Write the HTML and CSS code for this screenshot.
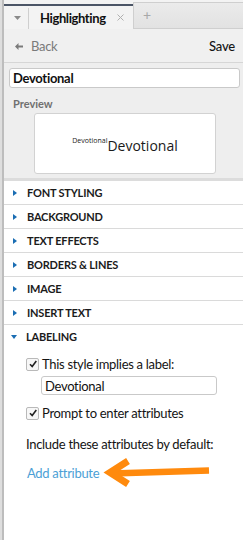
FILE: index.html
```html
<!DOCTYPE html>
<html lang="en">
<head>
    <meta charset="UTF-8">
    <meta name="viewport" content="width=device-width, initial-scale=1.0">
    <title>Highlighting</title>
    <link rel="stylesheet" href="styles.css">
</head>
<body>
    <div class="frame">
        <div class="tabs">
            <div class="tab-menu">
                <svg width="7" height="4" viewBox="0 0 7 4"><path d="M0 0h7L3.5 4z" fill="#8a8a8a"/></svg>
            </div>
            <div class="tab active">
                <span class="tab-title">Highlighting</span>
                <svg class="tab-close" width="7" height="7" viewBox="0 0 7 7"><path d="M0.5 0.5l6 6M6.5 0.5l-6 6" stroke="#b0b0b0" stroke-width="1"/></svg>
            </div>
            <div class="tab-add">+</div>
        </div>

        <div class="toolbar">
            <a class="back">
                <svg width="8" height="7" viewBox="0 0 8 7"><path d="M0 3.5L3.5 0v2.5H8v2H3.5V7z" fill="#7a7a7a"/></svg>
                Back
            </a>
            <span class="save">Save</span>
        </div>

        <div class="editor">
            <input class="name-input" type="text" value="Devotional">
            <div class="preview-label">Preview</div>
            <div class="preview">
                <span class="preview-sup">Devotional</span><span class="preview-main">Devotional</span>
            </div>
        </div>

        <ul class="sections">
            <li class="section">
                <div class="section-head"><span class="caret"></span>Font Styling</div>
            </li>
            <li class="section">
                <div class="section-head"><span class="caret"></span>Background</div>
            </li>
            <li class="section">
                <div class="section-head"><span class="caret"></span>Text Effects</div>
            </li>
            <li class="section">
                <div class="section-head"><span class="caret"></span>Borders &amp; Lines</div>
            </li>
            <li class="section">
                <div class="section-head"><span class="caret"></span>Image</div>
            </li>
            <li class="section">
                <div class="section-head"><span class="caret"></span>Insert Text</div>
            </li>
            <li class="section open">
                <div class="section-head"><span class="caret"></span>Labeling</div>
                <div class="section-body">
                    <label class="check-row">
                        <span class="checkbox">
                            <svg width="10" height="10" viewBox="0 0 10 10"><path d="M2 5.2l2.2 2.3L8.3 2" fill="none" stroke="#222" stroke-width="1.6"/></svg>
                        </span>
                        This style implies a label:
                    </label>
                    <input class="label-input" type="text" value="Devotional">
                    <label class="check-row">
                        <span class="checkbox">
                            <svg width="10" height="10" viewBox="0 0 10 10"><path d="M2 5.2l2.2 2.3L8.3 2" fill="none" stroke="#222" stroke-width="1.6"/></svg>
                        </span>
                        Prompt to enter attributes
                    </label>
                    <p class="include-text">Include these attributes by default:</p>
                    <div class="add-row">
                        <a class="add-link">Add attribute</a>
                        <!-- callout arrow drawn over the panel -->
                        <svg class="callout-arrow" width="112" height="36" viewBox="0 0 112 36">
                            <path d="M12 18.5L109 15.5" stroke="#ff8a0d" stroke-width="6.5" fill="none"/>
                            <path d="M28 6L10 17.5 28 29" stroke="#ff8a0d" stroke-width="7" fill="none" stroke-linejoin="miter"/>
                        </svg>
                    </div>
                </div>
            </li>
        </ul>
    </div>
</body>
</html>
```

FILE: styles.css
```css
html, body {
    height: 100%;
}
body {
    margin: 0;
    font-family: "Lato", "Open Sans", sans-serif;
    color: #1d1d1d;
    background-color: #fff;
}
.frame {
    min-height: 100%;
    border-left: 2px solid #dedede;
    box-shadow: inset 2px 0 0 #bdbdbd;
    padding-left: 2px;
    background-color: #fff;
}
.tabs {
    display: flex;
    height: 29px;
    background-color: #f3f3f3;
}
.tab-menu {
    width: 24px;
    margin-top: 4px;
    border-top: 2px solid #4b5566;
    display: flex;
    align-items: center;
    justify-content: center;
    padding-left: 1px;
    position: relative;
}
.tab-menu::after {
    content: "";
    position: absolute;
    right: 0;
    top: 2px;
    bottom: 0;
    width: 1px;
    background-color: #cfcfcf;
}
.tab.active {
    width: 104px;
    margin-top: 4px;
    border-top: 2px solid #4b5566;
    display: flex;
    align-items: center;
    padding-left: 11px;
    box-sizing: border-box;
    font-size: 13px;
    color: #111;
}
.tab-title {
    font-weight: 700;
    letter-spacing: -0.4px;
}
.tab-close {
    margin-left: 11px;
}
.tab-add {
    flex: 1;
    margin-top: 2px;
    border: 1px solid #cfcfcf;
    border-right: none;
    background: linear-gradient(#ebebeb, #e2e2e2);
    color: #a8a8a8;
    font-size: 14px;
    padding-left: 9px;
    display: flex;
    align-items: center;
    padding-bottom: 2px;
}
.toolbar {
    display: flex;
    justify-content: space-between;
    align-items: center;
    height: 33px;
    padding: 0 8px 0 11px;
    background-color: #f0f0f0;
    border-bottom: 1px solid #d6d6d6;
    font-size: 13px;
}
.back {
    color: #7a7a7a;
    display: flex;
    align-items: center;
    gap: 8px;
    padding-top: 1px;
    letter-spacing: -0.3px;
}
.save {
    color: #151515;
    font-weight: 500;
    padding-top: 1px;
    letter-spacing: -0.2px;
}
.editor {
    background-color: #eeeeee;
    padding: 5px 3px 3px 5px;
    border-bottom: 3px solid #dcdcdc;
}
.name-input {
    display: block;
    width: 100%;
    box-sizing: border-box;
    height: 20px;
    border: 1px solid #c9c9c9;
    border-radius: 3px;
    background-color: #fff;
    font-family: inherit;
    font-size: 13px;
    font-weight: 700;
    letter-spacing: -0.3px;
    color: #111;
    padding: 0 3px;
    margin: 0;
}
.preview-label {
    margin: 9px 0 0 4px;
    font-size: 11px;
    font-weight: 700;
    color: #707070;
}
.preview {
    width: 182px;
    height: 61px;
    box-sizing: border-box;
    margin: 3px 0 1px 25px;
    background-color: #fff;
    border: 1px solid #d2d2d2;
    border-radius: 3px;
    display: flex;
    align-items: center;
    justify-content: center;
    padding-top: 4px;
    font-family: "Open Sans", sans-serif;
    color: #1a1a1a;
}
.preview-sup {
    font-size: 7px;
    margin-top: -10px;
}
.preview-main {
    font-size: 14px;
}
.sections {
    list-style: none;
    margin: 0;
    padding: 0;
}
.section-head {
    height: 23px;
    border-bottom: 1px solid #dadada;
    display: flex;
    align-items: center;
    padding-left: 9px;
    font-size: 11px;
    font-weight: 700;
    text-transform: uppercase;
    letter-spacing: -0.2px;
    color: #1b1b1b;
}
.caret {
    width: 0;
    height: 0;
    border-top: 3px solid transparent;
    border-bottom: 3px solid transparent;
    border-left: 4px solid #1a6db3;
    margin-right: 10px;
}
.section.open .section-head {
    border-bottom: none;
    padding-left: 7px;
}
.section.open .caret {
    border-left: 3px solid transparent;
    border-right: 3px solid transparent;
    border-top: 4px solid #1a6db3;
    border-bottom: none;
    margin-right: 9px;
}
.section-body {
    padding: 9px 0 0 22px;
    font-size: 13px;
    letter-spacing: -0.3px;
    color: #141414;
}
.check-row {
    display: flex;
    align-items: center;
    gap: 3px;
    height: 14px;
}
.checkbox {
    width: 11px;
    height: 11px;
    border: 1px solid #b9b9b9;
    border-radius: 2px;
    background-color: #f7f7f7;
    display: flex;
    align-items: center;
    justify-content: center;
}
.label-input {
    display: block;
    width: 176px;
    height: 19px;
    box-sizing: border-box;
    margin: 5px 0 11px 15px;
    border: 1px solid #c9c9c9;
    border-radius: 3px;
    font-family: inherit;
    font-size: 13px;
    letter-spacing: -0.3px;
    color: #111;
    padding: 0 3px;
}
.include-text {
    margin: 16px 0 0 0;
    line-height: 16px;
}
.add-row {
    position: relative;
    margin-top: 13px;
    height: 16px;
}
.add-link {
    color: #4c9fd6;
    padding-left: 1px;
}
.callout-arrow {
    position: absolute;
    left: 74px;
    top: -10px;
}
```
